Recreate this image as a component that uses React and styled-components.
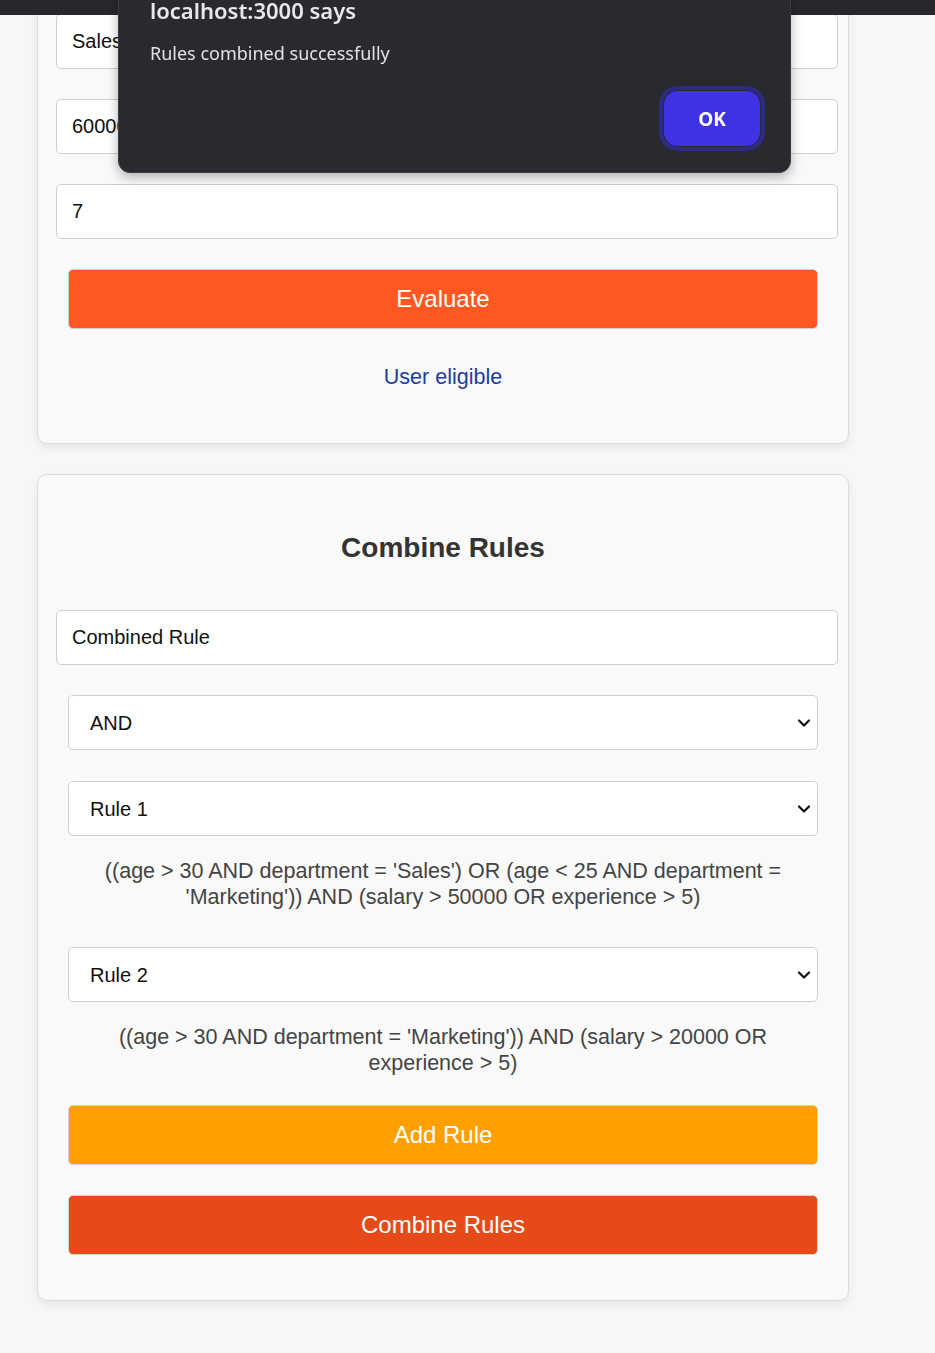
import React from 'react'
import styled, { createGlobalStyle } from 'styled-components'
import { ChevronDown } from 'lucide-react'

const rule1 = "((age > 30 AND department = 'Sales') OR (age < 25 AND department = 'Marketing')) AND (salary > 50000 OR experience > 5)"
const rule2 = "((age > 30 AND department = 'Marketing')) AND (salary > 20000 OR experience > 5)"

export default function App() {
  return (
    <>
      <GlobalStyle />
      <Page>
        <Card>
          <Title>Evaluate Rule</Title>
          <Field defaultValue="35" />
          <Field defaultValue="Sales" />
          <Field defaultValue="60000" />
          <Field defaultValue="7" />
          <ActionButton $color="#ff5722">Evaluate</ActionButton>
          <Result>User eligible</Result>
        </Card>

        <Card>
          <Title>Combine Rules</Title>
          <Field defaultValue="Combined Rule" />

          <SelectWrap $after={31}>
            <Select defaultValue="AND">
              <option>AND</option>
              <option>OR</option>
            </Select>
            <Chevron size={20} strokeWidth={2.6} />
          </SelectWrap>

          <SelectWrap $after={22}>
            <Select defaultValue="Rule 1">
              <option>Rule 1</option>
              <option>Rule 2</option>
            </Select>
            <Chevron size={20} strokeWidth={2.6} />
          </SelectWrap>
          <RuleText $after={37}>{rule1}</RuleText>

          <SelectWrap $after={22}>
            <Select defaultValue="Rule 2">
              <option>Rule 1</option>
              <option>Rule 2</option>
            </Select>
            <Chevron size={20} strokeWidth={2.6} />
          </SelectWrap>
          <RuleText $after={29}>{rule2}</RuleText>

          <ActionButton $color="#ffa000">Add Rule</ActionButton>
          <ActionButton $color="#e64a19" $last>Combine Rules</ActionButton>
        </Card>
      </Page>

      {/* browser alert on top of the page */}
      <TopStrip />
      <Alert>
        <AlertTitle>localhost:3000 says</AlertTitle>
        <AlertMessage>Rules combined successfully</AlertMessage>
        <AlertActions>
          <OkButton>OK</OkButton>
        </AlertActions>
      </Alert>
    </>
  )
}

// ==================== STYLED COMPONENTS ====================
const GlobalStyle = createGlobalStyle`
  html, body {
    margin: 0;
    background: #f6f7f9;
    font-family: "Liberation Sans", Arial, sans-serif;
  }
`
const Page = styled.div`
  margin-top: -207px;
  padding: 0 0 60px 37px;
`
const Card = styled.div`
  width: 812px;
  box-sizing: border-box;
  margin-bottom: 30px;
  padding: 0 10px 53px 18px;
  background: #f9f9f9;
  border: 1px solid #dcdcdc;
  border-radius: 10px;
  box-shadow: 0 4px 10px rgba(0, 0, 0, 0.07);
  display: flex;
  flex-direction: column;
  & + & {
    padding-bottom: 45px;
  }
`
const Title = styled.h2`
  width: 750px;
  margin: 57px 0 46px 12px;
  font-size: 28px;
  line-height: 32px;
  font-weight: 700;
  color: #333;
  text-align: center;
`
const Field = styled.input`
  width: 782px;
  height: 55px;
  box-sizing: border-box;
  margin: 0 0 30px;
  padding: 0 15px;
  border: 1px solid #cfcfcf;
  border-radius: 5px;
  background: #fff;
  font-family: inherit;
  font-size: 20px;
  color: #111;
  outline: none;
`
const SelectWrap = styled.div`
  position: relative;
  width: 750px;
  margin: 0 0 ${({ $after }) => $after}px 12px;
`
const Select = styled.select`
  width: 100%;
  height: 55px;
  box-sizing: border-box;
  padding: 0 21px;
  appearance: none;
  border: 1px solid #cfcfcf;
  border-radius: 5px;
  background: #fff;
  font-family: inherit;
  font-size: 20px;
  color: #111;
  outline: none;
`
const Chevron = styled(ChevronDown)`
  position: absolute;
  right: 4px;
  top: 18px;
  color: #111;
  pointer-events: none;
`
const RuleText = styled.p`
  width: 750px;
  box-sizing: border-box;
  margin: 0 0 ${({ $after }) => $after}px 12px;
  padding: 0 20px;
  font-size: 21.5px;
  line-height: 26px;
  color: #444;
  text-align: center;
`
const ActionButton = styled.button`
  width: 750px;
  height: 60px;
  margin: 0 0 ${({ $last }) => ($last ? 0 : 30)}px 12px;
  border: 1px solid #cfcfcf;
  border-radius: 5px;
  background: ${({ $color }) => $color};
  color: #fff;
  font-family: inherit;
  font-size: 24px;
  cursor: pointer;
`
const Result = styled.p`
  width: 750px;
  margin: 5px 0 0 12px;
  font-size: 21.5px;
  line-height: 26px;
  color: #1f3c9c;
  text-align: center;
`
const TopStrip = styled.div`
  position: fixed;
  top: 0;
  left: 0;
  right: 0;
  height: 15px;
  background: #27282c;
`
const Alert = styled.div`
  position: fixed;
  top: -20px;
  left: 118px;
  width: 673px;
  box-sizing: border-box;
  padding: 14px 30px 26px 31px;
  background: #292a2f;
  border: 1px solid #3b3c41;
  border-radius: 12px;
  box-shadow: 0 4px 12px rgba(0, 0, 0, 0.3);
  font-family: "Noto Sans", "Open Sans", sans-serif;
`
const AlertTitle = styled.div`
  font-size: 22px;
  line-height: 30px;
  font-weight: 600;
  color: #e8e8ea;
`
const AlertMessage = styled.div`
  margin-top: 16px;
  font-size: 18px;
  line-height: 24px;
  color: #e3e3e5;
`
const AlertActions = styled.div`
  margin-top: 26px;
  display: flex;
  justify-content: flex-end;
`
const OkButton = styled.button`
  width: 96px;
  height: 55px;
  border: none;
  border-radius: 14px;
  background: #4033e6;
  color: #fff;
  font-family: inherit;
  font-size: 19px;
  font-weight: 700;
  box-shadow: 0 0 0 1px #292a2f, 0 0 0 5px #2e2b86;
`
